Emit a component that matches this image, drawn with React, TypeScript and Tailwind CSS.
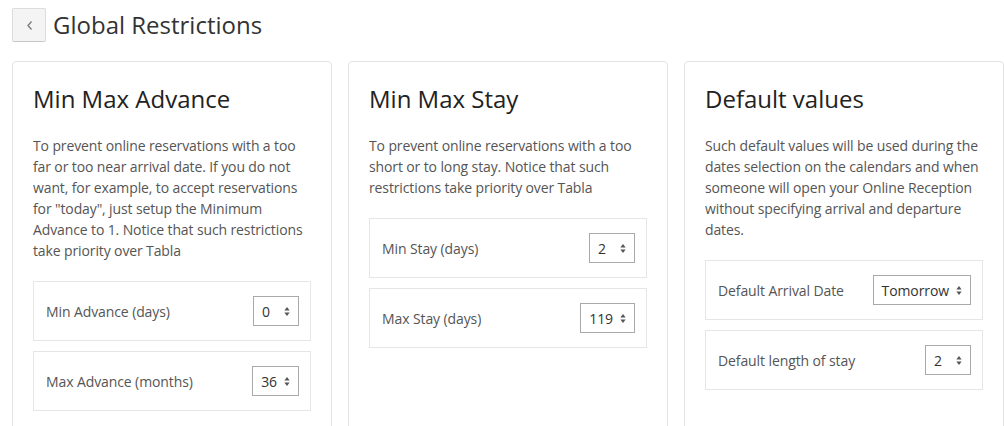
import React from "react";

function Arrows() {
  return (
    <svg width="6" height="11" viewBox="0 0 6 11" className="shrink-0">
      <path d="M3 1 L5.6 4.4 H0.4 Z" fill="#555" />
      <path d="M3 10 L5.6 6.6 H0.4 Z" fill="#555" />
    </svg>
  );
}

function Select({ value }: { value: string }) {
  return (
    <div className="h-[30px] min-w-[46px] border border-[#a9a9a9] bg-white pl-[8px] pr-[8px] flex items-center justify-between gap-[7px] text-[14px] tracking-[-0.1px] text-[#333]">
      <span>{value}</span>
      <Arrows />
    </div>
  );
}

function Row({ label, value }: { label: string; value: string }) {
  return (
    <div className="h-[60px] border border-[#e6e6e6] flex items-center justify-between pl-[12px] pr-[11px]">
      <span className="text-[14px] tracking-[-0.1px] text-[#555]">{label}</span>
      <Select value={value} />
    </div>
  );
}

function Card({
  title,
  desc,
  rows,
}: {
  title: string;
  desc: string;
  rows: { label: string; value: string }[];
}) {
  return (
    <div className="border border-[#e3e3e3] rounded-[4px] px-[20px] pt-[24px] pb-[40px]">
      <h2 className="text-[24px] leading-[26px] text-[#222]">{title}</h2>
      <p className="mt-[23px] text-[14px] leading-[21px] tracking-[-0.12px] text-[#555]">{desc}</p>
      <div className="mt-[20px] flex flex-col gap-[10px]">
        {rows.map((r) => (
          <Row key={r.label} label={r.label} value={r.value} />
        ))}
      </div>
    </div>
  );
}

export default function App() {
  return (
    <div
      className="w-[1004px] h-[426px] overflow-hidden bg-white"
      style={{ fontFamily: '"Open Sans", sans-serif' }}
    >
      <div className="flex items-center pl-[12px] pt-[8px]">
        <button className="w-[34px] h-[34px] bg-[#f4f4f4] border border-[#dcdcdc] border-b-[#c8c8c8] rounded-[2px] flex items-center justify-center">
          <svg width="7" height="11" viewBox="0 0 7 11">
            <path d="M5.5 1.5 L2 5.5 L5.5 9.5" stroke="#777" strokeWidth="1.3" fill="none" />
          </svg>
        </button>
        <h1 className="ml-[7px] text-[24px] leading-[34px] text-[#333]">Global Restrictions</h1>
      </div>
      <div className="mt-[19px] pl-[12px] grid grid-cols-[320px_320px_320px] gap-x-[16px]">
        <Card
          title="Min Max Advance"
          desc={'To prevent online reservations with a too far or too near arrival date. If you do not want, for example, to accept reservations for "today", just setup the Minimum Advance to 1. Notice that such restrictions take priority over Tabla'}
          rows={[
            { label: "Min Advance (days)", value: "0" },
            { label: "Max Advance (months)", value: "36" },
          ]}
        />
        <Card
          title="Min Max Stay"
          desc="To prevent online reservations with a too short or to long stay. Notice that such restrictions take priority over Tabla"
          rows={[
            { label: "Min Stay (days)", value: "2" },
            { label: "Max Stay (days)", value: "119" },
          ]}
        />
        <Card
          title="Default values"
          desc="Such default values will be used during the dates selection on the calendars and when someone will open your Online Reception without specifying arrival and departure dates."
          rows={[
            { label: "Default Arrival Date", value: "Tomorrow" },
            { label: "Default length of stay", value: "2" },
          ]}
        />
      </div>
    </div>
  );
}
